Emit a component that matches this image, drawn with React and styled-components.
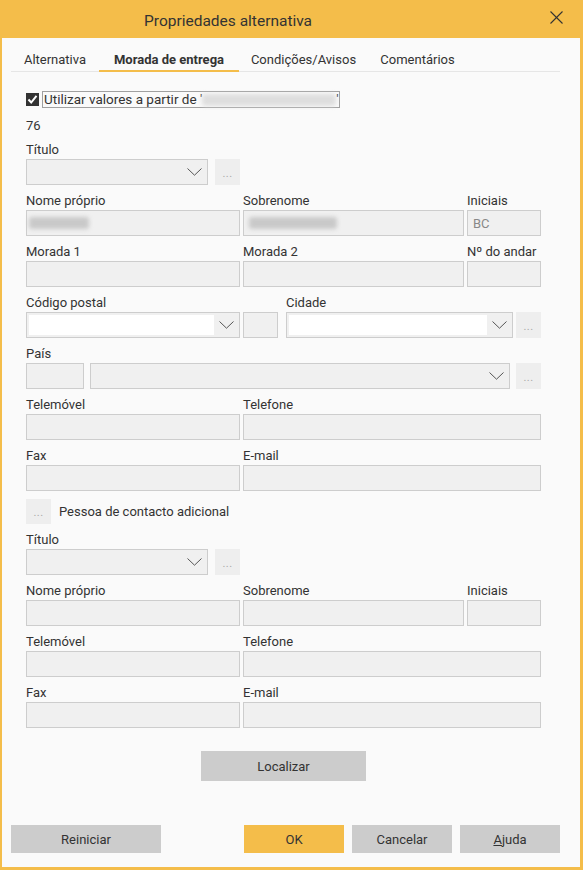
import React from 'react';
import styled, { createGlobalStyle } from 'styled-components';

const Global = createGlobalStyle`
  html, body { margin: 0; padding: 0; background: #fafafa; }
  body { font-family: Roboto, "Liberation Sans", sans-serif; }
  * { box-sizing: border-box; }
`;

const ORANGE = '#f4bd4a';

const Dialog = styled.div`
  width: 583px;
  height: 870px;
  display: flex;
  flex-direction: column;
  background: #fafafa;
  border-style: solid;
  border-color: ${ORANGE};
  border-width: 0 3px 3px 2px;
  color: #333;
  font-size: 13px;
`;

const TitleBar = styled.div`
  height: 38px;
  flex: none;
  display: flex;
  align-items: center;
  background: ${ORANGE};
  padding-left: 142px;
  padding-top: 3px;
`;

const Title = styled.div`
  font-size: 15.5px;
  line-height: 20px;
  color: #333;
`;

const CloseBtn = styled.button`
  margin-left: auto;
  margin-right: 9px;
  margin-top: -6px;
  width: 30px;
  height: 30px;
  border: 0;
  background: transparent;
  display: flex;
  align-items: center;
  justify-content: center;
  padding: 0;
`;

const TabBar = styled.div`
  display: flex;
  height: 34px;
  flex: none;
  margin: 0 20px 0 9px;
  border-bottom: 1px solid #e6e6e6;
`;

const Tab = styled.div`
  width: ${p => p.$w}px;
  height: 34px;
  margin-bottom: -1px;
  padding-top: 10px;
  display: flex;
  align-items: center;
  justify-content: center;
  font-size: 13px;
  color: #333;
  font-weight: ${p => (p.$active ? 700 : 400)};
  border-bottom: 2px solid ${p => (p.$active ? ORANGE : 'transparent')};
`;

const Body = styled.div`
  display: flex;
  flex-direction: column;
  padding-left: 24px;
  width: 539px;
`;

const CheckRow = styled.div`
  margin-top: 19px;
  display: flex;
  align-items: center;
  gap: 3px;
  height: 17px;
`;

const CheckBox = styled.span`
  width: 13px;
  height: 13px;
  background: #333;
  display: flex;
  align-items: center;
  justify-content: center;
`;

const FocusLabel = styled.span`
  width: 298px;
  height: 17px;
  border: 1px solid #a0a0a0;
  display: flex;
  align-items: center;
  padding-left: 1px;
  line-height: 15px;
  font-size: 13.5px;
  white-space: nowrap;
`;

const Blur = styled.span`
  display: inline-block;
  width: ${p => p.$w}px;
  height: ${p => p.$h || 11}px;
  background: ${p => p.$c || '#d4d4d4'};
  filter: blur(2px);
  border-radius: 3px;
  flex: none;
`;

const Number = styled.div`
  margin-top: 9px;
  line-height: 17px;
  height: 17px;
`;

const Form = styled.div`
  margin-top: 7px;
  width: 515px;
  display: flex;
  flex-direction: column;
  gap: 7px;
`;

const Row = styled.div`
  display: flex;
  gap: ${p => p.$gap}px;
  align-items: flex-end;
`;

const Field = styled.div`
  width: ${p => p.$w}px;
  margin-left: ${p => p.$ml || 0}px;
  flex: none;
  display: flex;
  flex-direction: column;
  gap: 1px;
`;

const Label = styled.div`
  height: 17px;
  line-height: 18px;
  font-size: 13px;
  color: #333;
  white-space: nowrap;
`;

const TextBox = styled.div`
  height: 26px;
  background: #f0f0f0;
  border: 1px solid #cdcdcd;
  display: flex;
  align-items: center;
  padding-left: ${p => (p.$blur ? 2 : 5)}px;
  color: #888;
  font-size: 13px;
`;

const Combo = styled.div`
  height: 26px;
  background: #f0f0f0;
  border: 1px solid #cdcdcd;
  display: flex;
  align-items: center;
  padding: 2px 5px 2px 2px;
`;

const ComboEdit = styled.div`
  flex: 1;
  align-self: stretch;
  background: ${p => (p.$editable ? '#ffffff' : 'transparent')};
  margin-right: 5px;
`;

const DotsBtn = styled.button`
  width: 25px;
  height: ${p => p.$h || 26}px;
  border: 0;
  padding: 2px 0 0;
  background: #eeeeee;
  color: #a8a8a8;
  font-size: 11px;
  font-family: inherit;
  display: flex;
  align-items: center;
  justify-content: center;
  letter-spacing: 0.5px;
`;

const ContactRow = styled.div`
  display: flex;
  align-items: center;
  gap: 8px;
  margin-top: 1px;
  font-size: 13px;
`;

const Center = styled.div`
  display: flex;
  justify-content: center;
  width: 515px;
  margin-top: 23px;
`;

const Btn = styled.button`
  width: ${p => p.$w}px;
  height: ${p => p.$h || 28}px;
  border: 0;
  padding: 0;
  background: ${p => (p.$primary ? ORANGE : '#cccccc')};
  color: #333;
  font-family: inherit;
  font-size: 13px;
  margin-left: ${p => (p.$push ? 'auto' : '0')};
`;

const Footer = styled.div`
  margin-top: auto;
  padding: 0 20px 14px 9px;
  display: flex;
  gap: 8px;
`;

const Chevron = () => (
  <svg width="15" height="8" viewBox="0 0 15 8">
    <polyline points="0.5,0.5 7.5,7.2 14.5,0.5" fill="none" stroke="#555" strokeWidth="1" />
  </svg>
);

const ComboBox = ({ editable }) => (
  <Combo>
    <ComboEdit $editable={editable} />
    <Chevron />
  </Combo>
);

const Dots = ({ h }) => <DotsBtn $h={h}>...</DotsBtn>;

const TitleRow = () => (
  <Row $gap={7}>
    <Field $w={182}>
      <Label>Título</Label>
      <ComboBox />
    </Field>
    <Field $w={25}>
      <Dots />
    </Field>
  </Row>
);

const NameRow = ({ filled }) => (
  <Row $gap={3}>
    <Field $w={214}>
      <Label>Nome próprio</Label>
      <TextBox $blur={filled}>{filled && <Blur $w={60} $h={12} $c="#c9c9c9" />}</TextBox>
    </Field>
    <Field $w={221}>
      <Label>Sobrenome</Label>
      <TextBox $blur={filled}>{filled && <><span style={{ width: 3 }} /><Blur $w={88} $h={12} $c="#c9c9c9" /></>}</TextBox>
    </Field>
    <Field $w={74}>
      <Label>Iniciais</Label>
      <TextBox>{filled ? 'BC' : ''}</TextBox>
    </Field>
  </Row>
);

const PhoneRows = () => (
  <>
    <Row $gap={3}>
      <Field $w={214}>
        <Label>Telemóvel</Label>
        <TextBox />
      </Field>
      <Field $w={298}>
        <Label>Telefone</Label>
        <TextBox />
      </Field>
    </Row>
    <Row $gap={3}>
      <Field $w={214}>
        <Label>Fax</Label>
        <TextBox />
      </Field>
      <Field $w={298}>
        <Label>E-mail</Label>
        <TextBox />
      </Field>
    </Row>
  </>
);

export default function App() {
  return (
    <>
      <Global />
      <Dialog>
        <TitleBar>
          <Title>Propriedades alternativa</Title>
          <CloseBtn aria-label="Fechar">
            <svg width="13" height="13" viewBox="0 0 13 13">
              <line x1="0.5" y1="0.5" x2="12.5" y2="12.5" stroke="#333" strokeWidth="1.1" />
              <line x1="12.5" y1="0.5" x2="0.5" y2="12.5" stroke="#333" strokeWidth="1.1" />
            </svg>
          </CloseBtn>
        </TitleBar>

        <TabBar>
          <Tab $w={88}>Alternativa</Tab>
          <Tab $w={140} $active>Morada de entrega</Tab>
          <Tab $w={129}>Condições/Avisos</Tab>
          <Tab $w={99}>Comentários</Tab>
        </TabBar>

        <Body>
          <CheckRow>
            <CheckBox>
              <svg width="11" height="11" viewBox="0 0 11 11">
                <polyline points="1.5,5.5 4.2,8.5 9.5,1.8" fill="none" stroke="#fff" strokeWidth="2" />
              </svg>
            </CheckBox>
            <FocusLabel>
              Utilizar valores a partir de '<Blur $w={134} $h={12} $c="#dedede" />'
            </FocusLabel>
          </CheckRow>
          <Number>76</Number>

          <Form>
            <TitleRow />
            <NameRow filled />
            <Row $gap={3}>
              <Field $w={214}>
                <Label>Morada 1</Label>
                <TextBox />
              </Field>
              <Field $w={221}>
                <Label>Morada 2</Label>
                <TextBox />
              </Field>
              <Field $w={74}>
                <Label>Nº do andar</Label>
                <TextBox />
              </Field>
            </Row>
            <Row $gap={3}>
              <Field $w={214}>
                <Label>Código postal</Label>
                <ComboBox editable />
              </Field>
              <Field $w={35}>
                <TextBox />
              </Field>
              <Field $w={227} $ml={5}>
                <Label>Cidade</Label>
                <ComboBox editable />
              </Field>
              <Field $w={25}>
                <Dots />
              </Field>
            </Row>
            <Row $gap={6}>
              <Field $w={58}>
                <Label>País</Label>
                <TextBox />
              </Field>
              <Field $w={420}>
                <ComboBox />
              </Field>
              <Field $w={25}>
                <Dots />
              </Field>
            </Row>
            <PhoneRows />
            <ContactRow>
              <Dots h={25} />
              <span>Pessoa de contacto adicional</span>
            </ContactRow>
            <TitleRow />
            <NameRow />
            <PhoneRows />
          </Form>

          <Center>
            <Btn $w={165} $h={30}>Localizar</Btn>
          </Center>
        </Body>

        <Footer>
          <Btn $w={150}>Reiniciar</Btn>
          <Btn $w={100} $primary $push>OK</Btn>
          <Btn $w={100}>Cancelar</Btn>
          <Btn $w={100}><u>A</u>juda</Btn>
        </Footer>
      </Dialog>
    </>
  );
}
